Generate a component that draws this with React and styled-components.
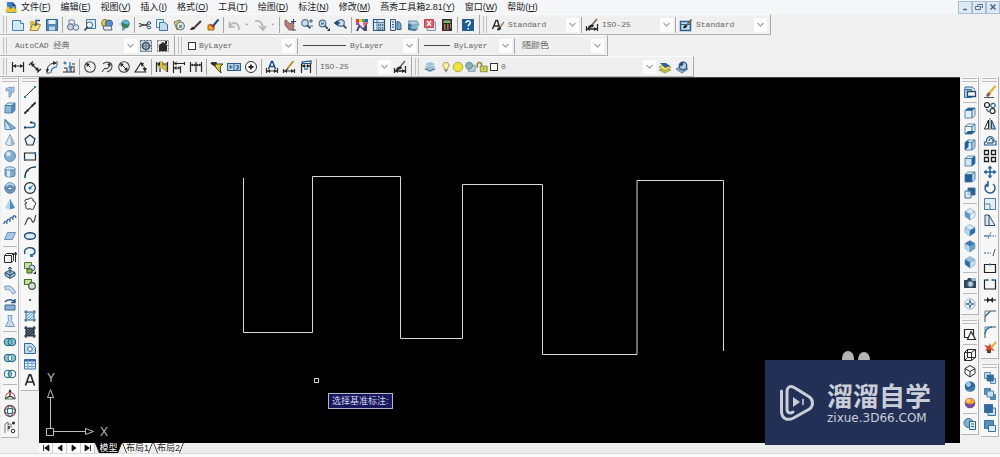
import React, { useState } from 'react';
import styled, { createGlobalStyle } from 'styled-components';

const GlobalStyle = createGlobalStyle`
  * {
    box-sizing: border-box;
  }
  body {
    margin: 0;
    background: #f0f0f0;
    font-family: 'Liberation Sans', 'Noto Sans CJK SC', sans-serif;
    font-size: 9px;
    color: #222;
  }
  button,
  select {
    font: inherit;
    color: inherit;
    border: 0;
    margin: 0;
    padding: 0;
    background: none;
  }
`;

const Page = styled.div`
  display: flex;
  flex-direction: column;
  min-height: 100vh;
`;

const MenuBar = styled.nav`
  display: flex;
  align-items: center;
  height: 14px;
  padding-left: 5px;
  background: #f4f6f8;
`;

const MenuList = styled.div`
  display: flex;
  flex: 1;
  gap: 10px;
  padding-left: 3px;
`;

const MenuItem = styled.button`
  line-height: 14px;
  white-space: nowrap;
  color: #1a1a1a;
`;

const WindowButton = styled.button`
  display: grid;
  place-items: center;
  width: 14px;
  height: 13px;
  background: #dce9f7;
  border: 1px solid #a9bdd3;
`;

const ToolbarRow = styled.div`
  display: flex;
  height: 21px;
`;

const Toolbar = styled.div`
  display: flex;
  align-items: center;
  height: 21px;
  padding-right: 3px;
  background: #f1f1f1;
  border-right: 1px solid #a8a8a8;
  border-bottom: 1px solid #b4b4b4;
  border-top: 1px solid #fafafa;
`;

const Grip = styled.span`
  width: 4px;
  height: 17px;
  margin: 0 2px 0 3px;
  border-left: 1px solid #c2c2c2;
  border-right: 1px solid #c2c2c2;
`;

const Sep = styled.span`
  width: 1px;
  height: 16px;
  margin: 0 1px 0 2px;
  background: #a6a6a6;
`;

const ToolButton = styled.button`
  display: grid;
  place-items: center;
  width: ${p => (p.$narrow ? '9px' : '17px')};
  height: 16px;
`;

const ComboBox = styled.label`
  display: grid;
  grid-template-columns: auto 1fr 13px;
  align-items: center;
  width: ${p => p.$width};
  height: 15px;
  padding-left: ${p => (p.$indent ? '6px' : '2px')};
  background: #efefef;
`;

const Lead = styled.span`
  grid-area: 1 / 1;
  display: flex;
  align-items: center;
  padding-right: 2px;
`;

const Select = styled.select`
  grid-area: 1 / 2 / 2 / 4;
  appearance: none;
  min-width: 0;
  width: 100%;
  height: 15px;
  font-family: 'Liberation Mono', 'Noto Sans CJK SC', monospace;
  font-size: ${p => (p.$cjk ? '9px' : '8px')};
  color: #666;
  outline: 0;
`;

const ComboArrow = styled.span`
  grid-area: 1 / 3;
  display: grid;
  place-items: center;
  height: 14px;
  background: #fdfdfd;
  pointer-events: none;
`;

const LineSample = styled.span`
  width: ${p => p.$width};
  height: 1px;
  margin: 0 2px;
  background: #444;
`;

const Body = styled.div`
  display: flex;
  flex: 1;
`;

const Dock = styled.div`
  display: flex;
  align-items: flex-start;
  gap: 2px;
  padding: ${p => (p.$right ? '0 1px' : '0 0 0 1px')};
`;

const DockColumn = styled.div`
  display: flex;
  flex-direction: column;
  gap: 4px;
`;

const DockPanel = styled.div`
  display: flex;
  flex-direction: column;
  align-items: center;
  width: 18px;
  padding-bottom: 2px;
  background: #f7f7f7;
  border-right: 1px solid #b4b4b4;
  border-bottom: 1px solid #b4b4b4;
`;

const DockGrip = styled.span`
  width: 15px;
  height: 4px;
  margin: 1px 0 2px;
  border-top: 1px solid #bcbcbc;
  border-bottom: 1px solid #bcbcbc;
`;

const DockSep = styled.span`
  width: 14px;
  height: 1px;
  margin: 2px 0;
  background: #b8b8b8;
`;

const Workspace = styled.main`
  display: flex;
  flex-direction: column;
  flex: 1;
  min-width: 0;
`;

const Canvas = styled.section`
  position: relative;
  flex: 1;
  min-height: 366px;
  background: #000;
  border-top: 1px solid #444;
`;

const Drawing = styled.svg`
  display: block;
  width: 100%;
  height: 365px;
`;

const DynamicPrompt = styled.div`
  position: absolute;
  left: 289px;
  top: 315px;
  padding: 0 3px;
  line-height: 14px;
  white-space: nowrap;
  color: #d4d4ec;
  background: #17175c;
  border: 1px solid #b4b4cc;
`;

const Badge = styled.aside`
  position: absolute;
  right: 15px;
  bottom: -2px;
  display: flex;
  align-items: center;
  gap: 12px;
  width: 180px;
  height: 85px;
  padding-left: 14px;
  background: #233055;
  color: #c9cdd8;
`;

const BadgeEars = styled.svg`
  position: absolute;
  left: 76px;
  top: -9px;
`;

const BadgeText = styled.div`
  display: flex;
  flex-direction: column;
  gap: 4px;
`;

const BadgeTitle = styled.div`
  font: 700 26px/26px 'Noto Sans CJK SC', sans-serif;
`;

const BadgeLink = styled.a`
  font: 12px/12px 'DejaVu Sans', sans-serif;
  color: inherit;
  text-decoration: none;
`;

const TabBar = styled.div`
  display: flex;
  height: 10px;
  background: #ececec;
`;

const TabNav = styled.button`
  display: grid;
  place-items: center;
  width: 14px;
  height: 10px;
  background: #fbfbfb;
  border-right: 1px solid #ccc;
`;

const Tab = styled.button`
  position: relative;
  width: ${p => (p.$active ? '27px' : '31px')};
  height: 10px;
  line-height: 10px;
  white-space: nowrap;
  color: ${p => (p.$active ? '#fff' : '#222')};
  background: ${p => (p.$active ? '#000' : '#f8f8f8')};
  clip-path: polygon(0 0, 100% 0, calc(100% - 4px) 100%, 4px 100%);

  &::before,
  &::after {
    content: '';
    position: absolute;
    top: 0;
    width: 1px;
    height: 10px;
    background: #222;
  }
  &::before {
    left: 2px;
    transform: skewX(22deg);
  }
  &::after {
    right: 2px;
    transform: skewX(-22deg);
  }
`;

const StatusStrip = styled.footer`
  height: 4px;
  background: #fafafa;
  border-top: 1px solid #dcdcdc;
`;

// ---- icons, all on a 14x14 grid ----

const K = '#2a2a2a';
const B = '#3a729e';
const N = { fill: 'none' };

const cube = (top, left, right) => (
  <>
    <path d="M2 4.500 5 2h7L9 4.500z" fill={top} stroke={B} strokeWidth=".8" />
    <path d="M2 4.500h7V12H2z" fill={left} stroke={B} strokeWidth=".8" />
    <path d="M9 4.500 12 2v7.500L9 12z" fill={right} stroke={B} strokeWidth=".8" />
  </>
);

const iso = (top, left, right) => (
  <>
    <path d="M2 4.500 7 1.500l5 3-5 3z" fill={top} stroke="#5a8db5" strokeWidth=".5" />
    <path d="M2 4.500v5L7 13V7.500z" fill={left} stroke="#5a8db5" strokeWidth=".5" />
    <path d="M12 4.500v5L7 13V7.500z" fill={right} stroke="#5a8db5" strokeWidth=".5" />
  </>
);

const venn = (a, mid) => (
  <>
    <circle cx="5" cy="7" r="3.800" fill={a} stroke="#1d6478" />
    <circle cx="9" cy="7" r="3.800" fill={a} stroke="#1d6478" />
    <path d="M7 3.800a3.800 3.800 0 0 1 0 6.400 3.800 3.800 0 0 1 0-6.400z" fill={mid} stroke="#1d6478" strokeWidth=".7" />
  </>
);

const squares = (front, back) => (
  <>
    <path d="M1.500 1.500h6v6h-6zM7.500 7.500h5v5h-5z" fill={back} stroke={B} strokeWidth=".8" />
    <path d="M4 4h6.500v6H4z" fill={front} stroke={B} strokeWidth=".8" />
  </>
);

const lens = (x, y) => (
  <>
    <circle cx={x} cy={y} r="3.300" fill="#c6dff0" stroke="#54738c" strokeWidth="1.200" />
    <path d={`M${x + 2.4} ${y + 2.4}l3 3`} stroke="#3a4c5c" strokeWidth="1.800" />
  </>
);

const icons = {
  app: (
    <>
      <path d="M2 1h6l4 4v8H2z" fill="#3d7fc1" />
      <path d="M0 12 3 5l3 4 3-3 5 6z" fill="#f0c22e" />
      <path d="M8 1v4h4z" fill="#234b85" />
    </>
  ),
  New: (
    <>
      <path d="M1.500 2.500h8l3 3v7h-11z" fill="#d3e9f5" stroke="#4681a5" />
      <path d="M9.500 2.500v3h3" fill="#fff" stroke="#4681a5" />
    </>
  ),
  Open: (
    <>
      <path d="M2 3h4l1 2h4v7H2z" fill="#d8b64c" />
      <path d="M4.500 6.500h8l-2.500 6H2z" fill="#f4dd85" stroke="#8d7329" strokeWidth=".8" />
      <path d="M8 6V2.500h4M7 8l2-3" stroke="#395774" strokeWidth="1.500" {...N} />
    </>
  ),
  Save: (
    <>
      <path d="M1.500 1.500h11v11h-11z" fill="#4d8ab9" stroke="#2f6391" />
      <path d="M3.500 2h7v4h-7z" fill="#e7f1f8" />
      <path d="M4 8.500h6v4H4z" fill="#bdd5e6" />
    </>
  ),
  Plot: (
    <>
      <path d="M3 2h5l1 4H3z" fill="#e7edf5" stroke="#7a8799" />
      <circle cx="4.500" cy="9" r="3" fill="#c9d1df" stroke="#5f6f8c" />
      <circle cx="10" cy="9.500" r="2.800" fill="#dde3ec" stroke="#5f6f8c" />
    </>
  ),
  'Plot Preview': (
    <>
      <path d="M3.500 1.500h9v9h-9z" fill="#dbe9f4" stroke="#48779c" />
      <circle cx="6.500" cy="7" r="3" fill="#eef7fc" stroke="#3e617e" />
      <path d="m4.500 9-3 3.500" stroke="#2b4256" strokeWidth="1.600" />
    </>
  ),
  Publish: (
    <>
      <circle cx="5" cy="5" r="3.500" fill="#ecc84c" stroke="#917526" />
      <circle cx="9" cy="5.500" r="3.500" fill="#5b91c4" stroke="#2e5b88" />
      <path d="M3 8h8l1 4H4z" fill="#e6edf4" stroke="#50647b" />
    </>
  ),
  '3DDWF': (
    <>
      <path d="M1 6 7 2l6 3-5 5z" fill="#cfd8df" />
      <circle cx="8.500" cy="6" r="4.200" fill="#39805a" />
      <path d="M5 4c2-3 6-2 7 1-1 3-4 1-7-1z" fill="#5fb4e0" />
      <path d="M5 9v4l4-2z" fill="#7197b3" />
    </>
  ),
  Cut: (
    <>
      <path d="M1 5.500 10 8M1 8.500 10 6" stroke="#333" strokeWidth="1.200" />
      <ellipse cx="11" cy="5" rx="1.800" ry="1.300" stroke="#2b4d72" {...N} />
      <ellipse cx="11" cy="9.500" rx="1.800" ry="1.300" stroke="#2b4d72" {...N} />
    </>
  ),
  Copy: (
    <>
      <path d="M1.500 1.500h7v8h-7z" fill="#e4f1f9" stroke="#4b86ab" />
      <path d="M4.500 4.500h5l3 2v6h-8z" fill="#bfdcec" stroke="#3d7699" />
    </>
  ),
  Paste: (
    <>
      <path d="m2 4 6-2 3 6-6 4z" fill="#d8cf8f" stroke="#77784a" />
      <circle cx="8.500" cy="8" r="4" fill="#d9e7da" stroke="#55756c" />
      <path d="M7 7h3v3H7z" fill="#7396a3" />
    </>
  ),
  'Match Properties': (
    <>
      <path d="m12 3-6 6" stroke="#50382c" strokeWidth="2.200" />
      <path d="M1 12c1-3 3-4 5-3 1 2-1 3-5 3z" fill={K} />
    </>
  ),
  'Block Editor': (
    <>
      <path d="M2 7h6v5H2z" fill="#f1ab30" stroke="#9b6515" />
      <path d="m12.500 1.500-6 7" stroke="#2b4a7b" strokeWidth="2" />
      <path d="m4 6 4 4" stroke="#c5371e" strokeWidth="1.500" />
    </>
  ),
  Undo: <path d="M12 12c0-8-6-9-9-4M2.500 3.500V9h5.500" stroke="#b5b5b5" strokeWidth="1.700" {...N} />,
  Redo: <path d="M2 3c5-1 8 2 8 8M6 8l4 4 3-4" stroke="#b5b5b5" strokeWidth="1.700" {...N} />,
  more: <path d="M5 6h5L7.500 8.500z" fill="#a4a4a4" />,
  Pan: (
    <>
      <path d="M2 2c2 0 3 2 5 4l2-2 2 4-1 4H6L2 7z" fill="#b27f79" stroke="#7d4f4c" strokeWidth=".8" />
      <path d="M10.500 1v5M8 3.500h5M9 12h4" stroke="#2c4e71" strokeWidth="1.200" />
    </>
  ),
  'Zoom Realtime': (
    <>
      {lens(5, 5)}
      <path d="M9 3h4M11 1v4M10 8h3" stroke="#35567c" />
    </>
  ),
  'Zoom Window': (
    <>
      {lens(5.5, 5.5)}
      <path d="M4 4.500h3v2H4z" fill="#56799a" />
      <path d="M13 10v3h-3z" fill={K} />
    </>
  ),
  'Zoom Previous': (
    <>
      {lens(7, 5)}
      <path d="M1 5h5M4 2.500 1 5l3 2.500" stroke="#24466b" strokeWidth="1.500" {...N} />
    </>
  ),
  Properties: (
    <>
      <path d="M1 1h3v3H1z" fill="#e33d33" />
      <path d="M4 1h3v3H4z" fill="#eec82f" />
      <path d="M7 1h3v3H7z" fill="#3cae54" />
      <path d="M10 1h3v3h-3z" fill="#2d64c8" />
      <path d="M1 4h3v3H1z" fill="#b43cba" />
      <path d="m4 6 4 4 4-5v8H9L5 9l-2 4H1z" fill="#4c4a70" />
      <path d="M8 4h5v2L8 8z" fill="#d56a86" />
    </>
  ),
  DesignCenter: (
    <>
      <path d="M1.500 1.500h11v11h-11z" fill="#e2eef7" stroke="#2d5578" strokeWidth="1.200" />
      <path d="M5 2v10M2 4.500h10M6.500 6h2v2h-2zM10 6h1v2h-1zM6.500 9.500h2v2h-2zM10 9.500h1v2h-1z" stroke="#3d6c93" strokeWidth=".9" {...N} />
    </>
  ),
  'Tool Palettes': (
    <>
      <path d="M1.500 1.500h5v11h-5z" fill="#dbe8f3" stroke="#33597d" />
      <path d="M3 4h2M3 6.500h2M3 9h2" stroke="#33597d" />
      <path d="M8 3.500c3 0 4 2 4 5v3H8z" fill="#7fa9cb" stroke="#33597d" />
    </>
  ),
  'Sheet Set Manager': (
    <>
      <path d="M2 3h9l2 4H5z" fill="#b5cfe0" stroke="#577c95" strokeWidth=".8" />
      <path d="m2 5 10 6-3 2-7-1z" fill="#3a7091" />
      <path d="m4 9 8-4v6H6z" fill="#86b3cd" />
    </>
  ),
  'Markup Set Manager': (
    <>
      <path d="M4 4h8.500v8.500H4z" fill="#dfe6ee" stroke="#8194aa" />
      <path d="M1.500 1.500h9v8h-9z" fill="#e1606a" stroke="#c04555" />
      <path d="m4 3 4 5M8 3 4 8" stroke="#fff" strokeWidth="1.300" />
    </>
  ),
  QuickCalc: (
    <>
      <path d="M2 1h10v12H2z" fill="#3b2b22" />
      <path d="M3.500 2.500h7v2.500h-7z" fill="#78bb82" />
      <path d="M4 7h1.500M7 7h1.500M10 7h1M4 9h1.500M7 9h1.500M10 9h1M4 11h1.500M7 11h1.500" stroke="#efc5a8" strokeWidth="1.200" />
    </>
  ),
  Help: (
    <>
      <path d="M1 1h12v12H1z" fill="#215d92" />
      <path d="M5 5c0-3 4.500-2.500 4.200 0C9 6.500 7.200 6.500 7.200 8.500M7.200 10v1.500" stroke="#fff" strokeWidth="1.500" {...N} />
    </>
  ),
  'Text Style': (
    <>
      <path d="M1.500 11 5 2.500h1.500L9 11M3 8h5" stroke={K} strokeWidth="1.400" {...N} />
      <path d="m13 4-4.500 6" stroke="#a08a70" strokeWidth="1.600" />
      <path d="M6 12.500c0-3 2-4 4-3 .5 2-1 3-4 3z" fill={K} />
    </>
  ),
  'Dimension Style': (
    <>
      <path d="m12 1-5 6" stroke="#7e6a56" strokeWidth="1.800" />
      <path d="M3 9c2-3 4-3 6-2 0 2-2 3-6 3z" fill={K} />
      <path d="M1.500 8v5M12.500 6v7M2 11h10" stroke={K} strokeWidth="1.300" />
      <path d="m2 11 3-2v4zM12 11 9 9v4z" fill={K} />
    </>
  ),
  'Table Style': (
    <>
      <path d="M1.500 3.500h10v9h-10z" fill="#c3dcef" stroke="#295f91" strokeWidth="1.500" />
      <path d="M2 6.500h9" stroke="#295f91" />
      <path d="m12.500 1.500-5 6" stroke="#6d664a" strokeWidth="1.800" />
      <path d="M4 10c1-4 4-3 4-2s-1 3-4 2z" fill={K} />
    </>
  ),
  'Workspace Settings': (
    <>
      <path d="M1.500 1.500h11v11h-11z" fill="#c9d7e0" stroke="#4d6370" strokeDasharray="2 1" />
      <circle cx="7" cy="7" r="3.300" fill="#bdd0dc" stroke="#3a5568" strokeWidth="1.500" />
      <path d="M7 2v10M2 7h10" stroke="#3a5568" strokeDasharray="1.500 7" />
      <circle cx="7" cy="7" r="1.200" fill="#fff" stroke="#3a5568" />
    </>
  ),
  'My Workspace': (
    <>
      <path d="M1.500 1.500h11v11h-11z" fill="#e4e4e4" stroke="#777" strokeDasharray="2 1" />
      <path d="M2 7 7 3l5 4h-1v5H3V7z" fill={K} />
      <path d="M9 2h2v3H9z" fill={K} />
    </>
  ),
  Linear: (
    <>
      <path d="M1.500 2v10M12.500 2v10M2 6h10" stroke={K} strokeWidth="1.200" />
      <path d="m2 6 3-2v4zM12 6 9 4v4z" fill={K} />
    </>
  ),
  Aligned: (
    <>
      <path d="M1 5 5 1.500M9 12.500 13 9M3.500 4l7 6.500" stroke={K} strokeWidth="1.200" />
      <path d="m3 3 4 1-3 3zM11 11l-4-1 3-3z" fill={K} />
    </>
  ),
  'Arc Length': (
    <>
      <path d="M2 12C2 6 5 3 11 3" stroke={K} {...N} />
      <path d="M6 13c0-4 2-6 6-6" stroke="#3d83b7" strokeWidth="1.400" {...N} />
      <path d="m8 1 4 2-4 2zM1 9l3 0-2 4z" fill={K} />
      <path d="M12 1v5M1 13h4" stroke={K} strokeWidth=".8" />
    </>
  ),
  Ordinate: (
    <>
      <path d="M1 12h12M5 8v4M5 8H2M9 12V7h4M12 8v4" stroke={K} {...N} />
      <path d="M3 1.500v3M1.500 3h3M8 2v9M6.500 7h3" stroke="#3777a6" strokeWidth="1.300" />
      <path d="M10 4h3" stroke={K} />
    </>
  ),
  Radius: (
    <>
      <circle cx="7" cy="7" r="5.300" stroke="#444" strokeWidth="1.100" {...N} />
      <path d="m7.500 7.500-4-4" stroke={K} />
      <path d="m3 3 4 1-3 3z" fill={K} />
    </>
  ),
  Jogged: (
    <>
      <path d="M3 4c2-3 9-2 9 2 0 3-2 5-5 6" stroke="#444" strokeWidth="1.100" {...N} />
      <path d="M2 12 5 8l2 1 3-4" stroke={K} {...N} />
      <path d="m11 3-4 1 3 3z" fill={K} />
    </>
  ),
  Diameter: (
    <>
      <circle cx="7" cy="7" r="5.300" stroke="#444" strokeWidth="1.100" {...N} />
      <path d="m3.500 3.500 7 7" stroke={K} />
      <path d="m3 3 4 1-3 3zM11 11l-4-1 3-3z" fill={K} />
    </>
  ),
  Angular: (
    <>
      <path d="M12.500 12H1L7.500 2" stroke={K} strokeWidth="1.200" {...N} />
      <path d="M7 4c3 1 4 4 4 7" stroke={K} {...N} />
      <path d="M6 3l4 0-2 4zM8.500 8 13 8l-2 4z" fill={K} />
    </>
  ),
  'Quick Dimension': (
    <>
      <path d="M1.500 2v10M12.500 2v10M2 4h10M5 8v4" stroke={K} strokeWidth="1.200" />
      <path d="M4 2h4L7 5h4l1 7-6-5H3z" fill="#e6c63b" stroke="#766317" strokeWidth=".6" />
      <path d="m2 4 3-2v4z" fill={K} />
    </>
  ),
  Baseline: (
    <>
      <path d="M1.500 1v12M2 3.500h11M2 8h6M12.500 2v3M8.500 6v7" stroke={K} strokeWidth="1.200" />
      <path d="m2 3.500 2.500-2v4zM2 8l2.500-2v4zM8 8 6 6.500v3z" fill={K} />
    </>
  ),
  Continue: (
    <>
      <path d="M1.500 2v10M7 2v10M12.500 2v10M2 5h10" stroke={K} strokeWidth="1.200" />
      <path d="m2 5 2-1.500v3zM12 5l-2-1.500v3zM7 5 5 3.500v3zM7 5l2-1.500v3z" fill={K} />
    </>
  ),
  'Dimension Space': (
    <>
      <path d="M1 3h6M1 3l6 4" stroke={K} strokeWidth="1.600" />
      <path d="M5 4h8l-3 3 1 6-4-4-2-3z" fill="#dfd13f" stroke="#3c4319" />
      <path d="m1 3 5-1-1 4z" fill={K} />
    </>
  ),
  Tolerance: (
    <>
      <path d="M.500 3.500h13v7H.500z" fill="#b9d5ea" stroke="#28608c" strokeWidth="1.200" />
      <path d="M7 3.500v7M2 7h3.500M3.700 5v4M9 5.500h2V9H9M11 5.500V9" stroke="#28608c" {...N} />
    </>
  ),
  'Center Mark': (
    <>
      <circle cx="7" cy="7" r="5.500" fill="#fbfbfb" stroke="#333" />
      <path d="M7 4.500v5M4.500 7h5" stroke={K} strokeWidth="1.800" />
    </>
  ),
  'Dimension Edit': (
    <>
      <path d="M3.500 9 6.500 1.500h1L10.500 9M4.500 6.500h5" stroke="#204e87" strokeWidth="1.500" {...N} />
      <path d="M1.500 8v5M12.500 8v5M2 11h10" stroke={K} strokeWidth="1.200" />
      <path d="m2 11 3-2v4zM12 11 9 9v4z" fill={K} />
    </>
  ),
  'Dimension Text Edit': (
    <>
      <path d="M1.500 9v4M12.500 9v4M2 11h10" stroke={K} strokeWidth="1.200" />
      <path d="m2 11 3-2v4zM12 11 9 9v4z" fill={K} />
      <path d="m11.500 1-6 7.500" stroke="#bd9329" strokeWidth="2" />
      <path d="M4 10.500 5 8l1.500 1z" fill={K} />
    </>
  ),
  'Dimension Update': (
    <>
      <path d="M3 5V2l9-1v3M3 3.500h9" stroke="#1e4e7e" strokeWidth="1.200" {...N} />
      <path d="M2.500 4v9M11.500 4v9M2 6h10" stroke={K} strokeWidth="1.200" />
      <path d="m3 6 3-2v4zM11 6 8 4v4z" fill={K} />
      <path d="M5 8h4v2H5z" fill="#5f9ac4" />
    </>
  ),
  Layers: (
    <>
      <path d="m1 9 6-2.500L13 9l-6 3z" fill="#6488a4" />
      <path d="m1 6.500 6-2.500 6 2.500-6 3z" fill="#8cadc6" stroke="#fff" strokeWidth=".5" />
      <path d="M1 4 7 1.500 13 4 7 7z" fill="#a4c0d5" stroke="#fff" strokeWidth=".5" />
    </>
  ),
  bulb: (
    <>
      <path d="M7 1.500a3.500 3.500 0 0 1 2 6.300V10H5V7.800A3.500 3.500 0 0 1 7 1.500z" fill="#fbf2a0" stroke="#9a8d4e" />
      <path d="M5.500 11h3M6 12.500h2" stroke="#666" />
    </>
  ),
  sun: <circle cx="7" cy="7" r="5.500" fill="#f0e436" stroke="#a49b36" />,
  freeze: (
    <>
      <path d="M5 5h8v7H5z" fill="#c6d6dd" stroke="#6e8b9b" />
      <circle cx="6" cy="5.500" r="4" fill="#8cb4ad" stroke="#5b8192" />
    </>
  ),
  lock: (
    <>
      <path d="M1.500 8V4c0-3 5-3 5 0v4" stroke="#88893a" strokeWidth="1.800" {...N} />
      <path d="M5 6h8v6.500H5z" fill="#d3d956" stroke="#7e7e2f" />
      <path d="M9 8v2" stroke="#555" />
    </>
  ),
  'Layer Previous': (
    <>
      <path d="m1 10 6-3 6 3-6 3z" fill="#c5c845" stroke="#777a33" strokeWidth=".6" />
      <path d="m1 7 6-3 6 3-6 4z" fill="#efe168" stroke="#7b772e" strokeWidth=".6" />
      <path d="M2 3h6l4 3-5 2z" fill="#34618d" />
    </>
  ),
  'Layer States': (
    <>
      <path d="m1 9 6-3 6 3-6 4z" fill="#8cb2cd" stroke="#43708f" strokeWidth=".8" />
      <circle cx="8" cy="6" r="3.800" fill="#a9c8dd" stroke="#2b567e" strokeWidth="1.300" />
      <path d="M8 1.500 4 5l4 2" fill="#20456b" />
      <path d="M8 7V5" stroke="#fff" />
    </>
  ),
  // left dock, modeling
  Polysolid: <path d="M3 3.500 8 2v9l-2 1.500V5L3 6zM8 3l3-1v5L8 8.500" fill="#b3cdea" stroke="#6c91bc" strokeWidth=".8" />,
  Box: cube('#dcebf7', '#8fb8d8', '#5b8fb9'),
  Wedge: (
    <>
      <path d="M2 2.500 12.500 11l-4 1.500L2 10z" fill="#8bb3d1" stroke={B} strokeWidth=".8" />
      <path d="M2 2.500 8.500 12.500H2z" fill="#cfe2f0" stroke={B} strokeWidth=".8" />
    </>
  ),
  Cone: (
    <>
      <path d="M7 1.500 2.500 11c2 2 7 2 9 0z" fill="#dfe9f1" stroke="#6c8499" strokeWidth=".8" />
      <path d="m7.500 2.500 3.500 8.500-3 1z" fill="#99b2c6" />
    </>
  ),
  Sphere: (
    <>
      <circle cx="7" cy="7" r="5.500" fill="#85afd0" stroke="#527fa5" strokeWidth=".8" />
      <circle cx="5.500" cy="5" r="2.300" fill="#d8e9f5" />
    </>
  ),
  Cylinder: (
    <>
      <path d="M2 3.500v7c1 2 9 2 10 0v-7z" fill="#80abcd" stroke="#4b779c" strokeWidth=".8" />
      <path d="M4 5h3v6.800l-3-.5z" fill="#dcebf6" />
      <ellipse cx="7" cy="3.500" rx="5" ry="1.700" fill="#d1e3f0" stroke="#4b779c" strokeWidth=".8" />
    </>
  ),
  Torus: (
    <>
      <circle cx="7" cy="7" r="5.300" fill="#7099bd" stroke="#436b90" strokeWidth=".8" />
      <path d="M3 5c2-3 6-3 8 0" stroke="#c9deee" strokeWidth="1.300" {...N} />
      <ellipse cx="7" cy="7.500" rx="2.300" ry="1.600" fill="#e9f2f8" stroke="#38608a" />
    </>
  ),
  Pyramid: (
    <>
      <path d="M7 1.500 2 11l5 1.500z" fill="#b6d4e8" />
      <path d="M7 1.500 12 11l-5 1.500z" fill="#4f8dbd" />
    </>
  ),
  Helix: <path d="M1 11c0-4 3-3 3 0M4 9c0-4 3-3 3 0M7 7c0-4 3-3 3 0M10 5c0-3 2.500-3 3 0" stroke="#3f6da5" strokeWidth="1.400" {...N} />,
  'Planar Surface': <path d="m4.500 3.500 8 0-3 7h-8z" fill="#a9c6e4" stroke="#6a8fb9" />,
  Extrude: (
    <>
      <path d="M1.500 5.500h7v7h-7zM1.500 5.500l2-2h7l-2 2M10.500 3.500v7l-2 2" stroke={K} {...N} />
      <path d="M12.500 12V3M11 5l1.500-3L14 5" stroke={K} {...N} />
    </>
  ),
  Presspull: (
    <>
      <path d="M2 6.500 7 4l5 2.500v3L7 12.500 2 9.500z" fill="#9abad5" stroke="#335a80" />
      <path d="M7 1v6M5 3l2-2 2 2M2 6.500l5 2.500 5-2.500M7 9v3" stroke="#26415d" {...N} />
    </>
  ),
  Sweep: (
    <path d="M1.500 4.500c5-2 9 1 11 6l-3 1.500C8 8 5 7 2.500 8z" fill="#c5d9ec" stroke="#7898bb" />
  ),
  Revolve: (
    <>
      <path d="M2 7h10v5H2z" fill="#8ab1d4" stroke="#37669a" />
      <path d="M2 4c2-3 8-3 10 0M12 1v3.500H8" stroke="#26558d" strokeWidth="1.400" {...N} />
    </>
  ),
  Loft: <path d="M5 1.500h4l-.5 5 3 6h-9l3-6z" fill="#c7d9ee" stroke="#7d9cc3" />,
  Union: venn('#7fbdd0', '#7fbdd0'),
  Subtract: venn('#8cc3d6', '#fff'),
  Intersect: venn('#f4f9fb', '#77b6cd'),
  '3D Move': (
    <>
      <path d="M7 8V2M7 8 2 11M7 8l5 3" stroke={K} strokeWidth="1.200" />
      <path d="M7 1 5.500 4h3z" fill={K} />
      <path d="m2 11 1.500-5L7 4l4 2 1.500 5" stroke="#be4848" {...N} />
      <path d="M2 11h10" stroke="#3c855a" />
    </>
  ),
  '3D Rotate': (
    <>
      <circle cx="7" cy="7" r="5.500" stroke="#943c40" strokeWidth="1.300" {...N} />
      <ellipse cx="7" cy="7" rx="2.500" ry="5.500" stroke="#315f87" {...N} />
      <ellipse cx="7" cy="7" rx="5.500" ry="2.500" stroke="#2b6b5a" {...N} />
    </>
  ),
  '3D Align': (
    <>
      <path d="M2 13V4l3-2v9M5 4h3v4" stroke="#777" {...N} />
      <circle cx="10.500" cy="3" r="1.500" fill={K} />
      <circle cx="10" cy="11" r="1.800" stroke={K} {...N} />
      <path d="M6 6v3" stroke={K} strokeWidth="1.500" />
    </>
  ),
  // left dock, draw
  Line: (
    <>
      <path d="m2 12 10-10" stroke="#333" />
      <path d="M1 11h2v2H1zM11 1h2v2h-2z" fill="#2d77ad" />
    </>
  ),
  'Construction Line': (
    <>
      <path d="m1.500 12.500 11-11" stroke="#222" strokeWidth="1.200" />
      <path d="M3.500 8.500h2v2h-2zM8.500 3.500h2v2h-2z" fill="#222" />
      <path d="m13 1-3 1 2 2zM1 13l3-1-2-2z" fill="#222" />
    </>
  ),
  Polyline: (
    <>
      <path d="M2 10.500h7c4 0 4-5 0-5" stroke="#2d6695" strokeWidth="1.400" {...N} />
      <path d="M1 9.500h2v2H1zM7 4.500h2v2H7z" fill="#173c61" />
    </>
  ),
  Polygon: <path d="M7 2 12 6l-2 6H4L2 6z" fill="#eaf3f8" stroke="#223b50" strokeWidth="1.200" />,
  Rectangle: (
    <>
      <path d="M1.500 4h11v7h-11z" fill="#e9f3fa" stroke="#222" strokeWidth="1.200" />
      <path d="M1 10h2v2H1zM11 3h2v2h-2z" fill="#2d77ad" />
    </>
  ),
  Arc: (
    <>
      <path d="M2 12C2 6 6 2 12 2" stroke="#222" strokeWidth="1.200" {...N} />
      <path d="M1 11h2v2H1zM11 1h2v2h-2zM4 4.500h2v2H4z" fill="#2d77ad" />
    </>
  ),
  Circle: (
    <>
      <circle cx="7" cy="7" r="5.400" fill="#edf6fb" stroke="#222" strokeWidth="1.200" />
      <path d="m7 7 3.500-3.500" stroke="#2d77ad" />
      <circle cx="7" cy="7" r="1.600" fill="#2d77ad" />
    </>
  ),
  'Revision Cloud': (
    <path d="M4 6C.5 5 2 1 5 2.500 7 0 11 1 10 4c3 0 3.500 4 1 5 1 3-2 4.500-4 2.500-3 2-5-1-4-3C1 7.500 2 6 4 6z" fill="#f6fafc" stroke="#222" />
  ),
  Spline: <path d="M1.500 12c2-1 2-8 5-7s2 5 4 4 1-5 2.500-7" stroke="#444" strokeWidth="1.200" {...N} />,
  Ellipse: <ellipse cx="7" cy="7" rx="5.500" ry="3.300" fill="#d9ebf6" stroke="#1f486c" strokeWidth="1.400" />,
  'Ellipse Arc': (
    <>
      <path d="M2 9C0 4 5 2 9 3c4 1 4 6 0 7" stroke="#244e73" strokeWidth="1.300" fill="#e6f1f8" />
      <path d="M7 9h3v3H7z" fill="#2d77ad" />
    </>
  ),
  'Insert Block': (
    <>
      <path d="M1.500 1.500h7v6h-7z" fill="#cde0a1" stroke="#50762e" />
      <circle cx="9" cy="7" r="3" fill="#c7dde9" stroke="#335f83" />
      <path d="M4 8h5v4H4z" fill="#9cc060" stroke="#37561e" />
      <path d="M13 10v3h-3z" fill={K} />
    </>
  ),
  'Make Block': (
    <>
      <path d="M1.500 2.500h7v5h-7z" fill="#cde0a1" stroke="#48702c" strokeWidth="1.200" />
      <circle cx="9" cy="9" r="3.300" fill="#d5e4ce" stroke="#3a5d3a" strokeWidth="1.200" />
    </>
  ),
  Point: <path d="M6 6h2v2H6z" fill="#2c6796" />,
  Hatch: (
    <>
      <path d="M3 3h8v8H3z" fill="#cfe3f1" />
      <path d="M3 1v12M11 1v12M1 3h12M1 11h12" stroke="#2a5f8c" />
      <path d="m3 8 5-5M3 11l8-8M6 11l5-5" stroke="#5b91b9" strokeWidth=".8" />
    </>
  ),
  Gradient: (
    <>
      <path d="M3 3h8v8H3z" fill="#50636f" />
      <path d="M3 1v12M11 1v12M1 3h12M1 11h12" stroke="#1d2b36" strokeWidth="1.200" />
      <path d="m3 8 5-5M3 11l8-8M6 11l5-5" stroke="#1d2b36" />
    </>
  ),
  Region: (
    <>
      <path d="M1.500 2.500h7l4 4v6h-11z" fill="#c4dcec" stroke="#356b95" />
      <circle cx="7" cy="8" r="2.300" fill="#fff" stroke="#356b95" />
    </>
  ),
  Table: (
    <>
      <path d="M1.500 2.500h11v9.500h-11z" fill="#e8f2fb" stroke="#3e76b1" />
      <path d="M1.500 3.500h11" stroke="#2c60a5" strokeWidth="2" />
      <path d="M2 6.500h10M2 9.500h10M5 3v9M9 3v9" stroke="#6f9fd1" />
    </>
  ),
  'Multiline Text': <path d="M2.500 12.500 6.300 1.800h1.400l3.800 10.700M4 9h6" stroke={K} strokeWidth="1.700" {...N} />,
  // right dock, view
  'Named Views': (
    <>
      <path d="M2 4.500V2h7l3 2.500" fill="#cfe1ef" stroke={B} />
      <path d="M1.500 4.500h7v8h-7z" fill="#b1cee2" stroke={B} />
      <path d="M4.500 6.500h8v5h-8z" fill="#f7fafc" stroke="#1e4d75" strokeWidth="1.300" />
    </>
  ),
  Top: cube('#245f93', '#e6f0f8', '#d0e3f0'),
  Bottom: (
    <>
      {cube('#f3f8fb', '#f3f8fb', '#d7e7f2')}
      <path d="m2 12 3-3h7l-3 3z" fill="#245f93" />
    </>
  ),
  Left: (
    <>
      {cube('#e6f0f8', '#d6e6f2', '#b4d0e4')}
      <path d="m2 12V4.500L5.500 2v7z" fill="#245f93" />
    </>
  ),
  Right: cube('#e6f0f8', '#d6e6f2', '#245f93'),
  Front: cube('#e6f0f8', '#245f93', '#c4daea'),
  Back: (
    <>
      <path d="M5 2h7v7H5z" fill="#245f93" stroke={B} />
      <path d="M2 5h6v7H2z" fill="#d7e7f2" fillOpacity=".8" stroke={B} />
    </>
  ),
  'SW Isometric': iso('#d9e9f5', '#5e9aca', '#e8f1f8'),
  'SE Isometric': iso('#d9e9f5', '#bcd8ec', '#2e6ba3'),
  'NE Isometric': iso('#3d78ac', '#bcd8ec', '#6fa3cc'),
  'NW Isometric': iso('#9cc3df', '#2e6ba3', '#c9dfee'),
  Camera: (
    <>
      <path d="M1 4h3l1-2h3l1 2h4v8H1z" fill="#33495e" />
      <path d="M9 2h4v3H9z" fill="#9db9cd" />
      <circle cx="7.500" cy="8" r="2.700" fill="#b5cfe0" stroke="#6f92ac" />
    </>
  ),
  'View Center': (
    <>
      <circle cx="7" cy="7" r="5.200" fill="#eef4f8" stroke="#9fb5c5" />
      <path d="M7 3v8M3 7h8" stroke="#5e8db0" strokeWidth="2" />
      <circle cx="7" cy="7" r="1.500" fill="#fff" stroke="#3d6d92" />
    </>
  ),
  '2D Wireframe': (
    <>
      <path d="M1.500 2.500h9v8h-9z" fill="#fff" stroke={K} strokeWidth="1.200" />
      <path d="M8 4.500 12.500 12.500h-8z" fill="#fff" stroke={K} strokeWidth="1.200" />
    </>
  ),
  '3D Wireframe': <path d="M1.500 4.500h7v8h-7zM4.500 1.500h8v8h-8zM1.500 4.500l3-3M8.500 4.500l4-3M8.500 12.500l4-3M1.500 12.500l3-3" stroke={K} {...N} />,
  '3D Hidden': <path d="M2 4.500 7 1.500l5 3v5l-5 3.500-5-3.500zM2 4.500l5 3 5-3M7 7.500V13" fill="#fdfdfd" stroke={K} />,
  Realistic: (
    <>
      <circle cx="7" cy="6.500" r="5.300" fill="#2d6b9e" />
      <circle cx="5.500" cy="4.500" r="2.400" fill="#a5cde8" />
      <path d="M3 10c3 1 6 0 8-3" stroke="#69a4cb" {...N} />
    </>
  ),
  Conceptual: (
    <>
      <circle cx="7" cy="7" r="5.300" fill="#764a9c" />
      <path d="M2 6c1-5 9-5 10 0-3 3-7 3-10 0z" fill="#f2a433" />
      <circle cx="5.500" cy="4.500" r="1.500" fill="#fbe390" />
    </>
  ),
  'Visual Styles': (
    <>
      <circle cx="5.500" cy="6" r="4.500" fill="#82b0d0" stroke="#3f729a" />
      <path d="M6.500 4.500h6v8h-6z" fill="#dfecf5" stroke="#2d628f" />
      <path d="M8 7h3M8 9.500h3" stroke="#2d628f" />
    </>
  ),
  // right dock, modify
  Erase: (
    <>
      <path d="m12.500 1-6 7" stroke="#dfb440" strokeWidth="2.500" />
      <path d="m3 11 2-4 3 2-3 3z" fill="#8a5d49" />
      <path d="M1 12.500h10" stroke="#555" />
    </>
  ),
  'Copy Object': (
    <>
      <circle cx="4" cy="4" r="2.500" stroke="#222" strokeWidth="1.200" {...N} />
      <circle cx="10" cy="4.500" r="2.200" stroke="#2d6695" strokeWidth="1.200" {...N} />
      <circle cx="9.500" cy="10" r="2.500" stroke="#222" strokeWidth="1.200" {...N} />
      <path d="m3 8 3 3" stroke="#2d6695" strokeWidth="1.200" />
    </>
  ),
  Mirror: (
    <>
      <path d="M5.500 3v9h-4z" fill="#fff" stroke="#222" />
      <path d="M8.500 3v9h4z" fill="#9bc1db" stroke="#224a6b" />
      <path d="M7 1v12" stroke="#444" strokeWidth=".8" />
    </>
  ),
  Offset: (
    <>
      <path d="M1.500 12v-3h2C2 3 11 1 11 8h2v4z" fill="#dbe9f3" stroke="#2c6796" strokeWidth="1.200" />
      <path d="M4 10h6c1-5-4-6-4-2" stroke="#1d3850" {...N} />
    </>
  ),
  Array: <path d="M1.500 1.500h4v4h-4zM8.500 1.500h4v4h-4zM1.500 8.500h4v4h-4zM8.500 8.500h4v4h-4z" fill="#fff" stroke="#222" strokeWidth="1.300" />,
  Move: (
    <>
      <path d="M7 2v10M2 7h10" stroke="#255f92" strokeWidth="1.500" />
      <path d="m7 .5 2.500 3h-5zM7 13.500l2.500-3h-5zM.500 7l3-2.500v5zM13.500 7l-3-2.500v5z" fill="#255f92" />
    </>
  ),
  Rotate: <path d="M5 2.500a5 5 0 1 0 5 .5M5 0v5H1.500" stroke="#2b5f8d" strokeWidth="1.500" {...N} />,
  Scale: <path d="M1.500 1.500h11v11h-11zM1.500 7h5.500v5.500H1.500z" fill="#e3eff7" stroke="#537c9c" />,
  Stretch: <path d="M2 2h4v10.500H2zM6 2l6 10.500H6" fill="#dce8f0" stroke="#344f65" />,
  Trim: (
    <>
      <path d="M1 7h5" stroke="#2c6796" strokeWidth="1.200" />
      <path d="M7 7h6" stroke="#2c6796" strokeDasharray="1.500 1" />
      <path d="m5 10 3-7" stroke="#6c8ba2" />
    </>
  ),
  Extend: (
    <>
      <path d="M1 8h7" stroke="#2c6796" strokeDasharray="2 1" strokeWidth="1.200" />
      <path d="m10 11 2-7" stroke="#555" />
    </>
  ),
  'Break at Point': (
    <>
      <path d="M1.500 3.500h11v8h-11z" fill="#f6f6f6" stroke="#222" strokeWidth="1.200" />
      <path d="M6 2.500h2v2H6z" fill="#2d77ad" />
    </>
  ),
  Break: (
    <>
      <path d="M4.500 3h-3v9h11V3h-3" stroke="#222" strokeWidth="1.200" {...N} />
      <path d="M3.500 2h2v2h-2zM8.500 2h2v2h-2z" fill="#2d77ad" />
    </>
  ),
  Join: (
    <>
      <path d="M1 7h12" stroke="#222" strokeWidth="1.200" />
      <path d="m7 7-3-3v6zM7 7l3-3v6z" fill="#222" />
    </>
  ),
  Chamfer: (
    <>
      <path d="M2 13V7.500L7.500 2H13" stroke="#3b4c5a" {...N} />
      <path d="M2 7.500 7.500 2" stroke="#2d77ad" strokeWidth="1.500" />
      <path d="M2 7V2h5" stroke="#777" {...N} />
    </>
  ),
  Fillet: (
    <>
      <path d="M2 13V9c0-4 3-7 7-7h4" stroke="#3b4c5a" {...N} />
      <path d="M2 9c0-4 3-7 7-7" stroke="#2d77ad" strokeWidth="1.600" {...N} />
      <path d="M2 6V2h4" stroke="#777" {...N} />
    </>
  ),
  Explode: (
    <>
      <path d="m1 4 5 1 1-3 1 3 3-1-2 3 3 3-4-1-2 4-1-4-3 1 2-3z" fill="#d3432d" />
      <path d="m13 1-5 6" stroke="#e5ae34" strokeWidth="2" />
      <path d="M4 9h4v3H4z" fill="#5c3b2b" />
    </>
  ),
  'Bring to Front': squares('#2f6ba0', '#c9deed'),
  'Send to Back': squares('#c9deed', '#5a8ebb'),
  'Bring Above': (
    <>
      <path d="M5 5h7.500v7.500H5z" fill="#c9deed" stroke={B} />
      <path d="M1.500 1.500h8v8h-8z" fill="#2f6ba0" stroke={B} />
    </>
  ),
  'Send Under': (
    <>
      <path d="M1.500 1.500h9v8h-9z" fill="#5a8ebb" stroke={B} />
      <path d="M5.500 6.500h7v6h-7z" fill="#dfecf5" stroke={B} />
    </>
  )
};

function Icon({ name, size = 14 }) {
  return (
    <svg width={size} height={size} viewBox="0 0 14 14" aria-hidden="true">
      {icons[name]}
    </svg>
  );
}

// '|' in a list of tools stands for a separator
function Tools({ items }) {
  return items.map((name, i) => {
    if (name === '|') return <Sep key={i} />;
    return (
      <ToolButton key={i} $narrow={name === 'more'} aria-label={name} title={name}>
        <Icon name={name} size={name === 'more' ? 9 : 14} />
      </ToolButton>
    );
  });
}

function DockTools({ items }) {
  return (
    <DockPanel>
      <DockGrip />
      {items.map((name, i) =>
        name === '|' ? (
          <DockSep key={i} />
        ) : (
          <ToolButton key={i} aria-label={name} title={name}>
            <Icon name={name} />
          </ToolButton>
        )
      )}
    </DockPanel>
  );
}

function Combo({ label, value, width, lead, cjk, indent }) {
  return (
    <ComboBox $width={width} $indent={indent}>
      {lead && <Lead>{lead}</Lead>}
      <Select aria-label={label} defaultValue={value} $cjk={cjk}>
        <option>{value}</option>
      </Select>
      <ComboArrow>
        <svg width="7" height="5" viewBox="0 0 7 5">
          <path d="M.5 1l3 3 3-3" fill="none" stroke="#aaa" strokeWidth="1.300" />
        </svg>
      </ComboArrow>
    </ComboBox>
  );
}

const Swatch = styled.span`
  width: 8px;
  height: 8px;
  margin: 0 1px 0 2px;
  background: #fff;
  border: 1px solid #333;
`;

const menus = [
  ['文件', 'F'],
  ['编辑', 'E'],
  ['视图', 'V'],
  ['插入', 'I'],
  ['格式', 'O'],
  ['工具', 'T'],
  ['绘图', 'D'],
  ['标注', 'N'],
  ['修改', 'M'],
  ['燕秀工具箱2.81', 'Y'],
  ['窗口', 'W'],
  ['帮助', 'H']
];

const standardTools = [
  'New', 'Open', 'Save', '|',
  'Plot', 'Plot Preview', 'Publish', '3DDWF', '|',
  'Cut', 'Copy', 'Paste', 'Match Properties', 'Block Editor', '|',
  'Undo', 'more', 'Redo', 'more', '|',
  'Pan', 'Zoom Realtime', 'Zoom Window', 'Zoom Previous', '|',
  'Properties', 'DesignCenter', 'Tool Palettes', 'Sheet Set Manager', 'Markup Set Manager', 'QuickCalc', '|',
  'Help'
];

const dimensionTools = [
  'Linear', 'Aligned', 'Arc Length', 'Ordinate', '|',
  'Radius', 'Jogged', 'Diameter', 'Angular', '|',
  'Quick Dimension', 'Baseline', 'Continue', '|',
  'Dimension Space', 'Tolerance', 'Center Mark', '|',
  'Dimension Edit', 'Dimension Text Edit', 'Dimension Update', '|'
];

const modelingTools = [
  'Polysolid', 'Box', 'Wedge', 'Cone', 'Sphere', 'Cylinder', 'Torus', 'Pyramid', 'Helix', 'Planar Surface', '|',
  'Extrude', 'Presspull', 'Sweep', 'Revolve', 'Loft', '|',
  'Union', 'Subtract', 'Intersect', '|',
  '3D Move', '3D Rotate', '3D Align'
];

const drawTools = [
  'Line', 'Construction Line', 'Polyline', 'Polygon', 'Rectangle', 'Arc', 'Circle', 'Revision Cloud', 'Spline',
  'Ellipse', 'Ellipse Arc', 'Insert Block', 'Make Block', 'Point', 'Hatch', 'Gradient', 'Region', 'Table',
  'Multiline Text'
];

const viewTools = [
  'Named Views', '|',
  'Top', 'Bottom', 'Left', 'Right', 'Front', 'Back', '|',
  'SW Isometric', 'SE Isometric', 'NE Isometric', 'NW Isometric', '|',
  'Camera', '|',
  'View Center'
];

const visualTools = ['2D Wireframe', '|', '3D Wireframe', '3D Hidden', 'Realistic', 'Conceptual', '|', 'Visual Styles'];

const modifyTools = [
  'Erase', 'Copy Object', 'Mirror', 'Offset', 'Array', 'Move', 'Rotate', 'Scale', 'Stretch', 'Trim', 'Extend',
  'Break at Point', 'Break', 'Join', 'Chamfer', 'Fillet', 'Explode'
];

const orderTools = ['Bring to Front', 'Send to Back', 'Bring Above', 'Send Under'];

const tabArrows = [
  ['First', 'M4.500 2v6M10 2v6L5.500 5z'],
  ['Previous', 'M9 2v6L5 5z'],
  ['Next', 'M5 2v6l4-3z'],
  ['Last', 'M9.500 2v6M4 2v6l4.500-3z']
];

function ModelSpace() {
  return (
    <Canvas>
      <Drawing>
        <path
          d="M204.500 100v154.500h69V98.500h88v162h62v-154h80v170h94.500V102.500h86.500V273"
          fill="none"
          stroke="#d8d8d8"
        />
        <path d="M275.500 300.500h4v4h-4z" fill="none" stroke="#ddd" />
        <g fill="none" stroke="#bdbdbd">
          <path d="M7.500 350.500h7v7h-7zM11.500 350V319M15 353.500h31" />
          <path d="m11.500 311.500-3 8h6zM54.500 353.500l-8-3v6z" />
        </g>
        <g fill="#bdbdbd" fontSize="12" fontFamily="Liberation Sans, sans-serif">
          <text x="8" y="304">Y</text>
          <text x="61" y="358">X</text>
        </g>
      </Drawing>
      <DynamicPrompt>选择基准标注:</DynamicPrompt>
      <Badge>
        <BadgeEars width="32" height="9" viewBox="0 0 32 9">
          <ellipse cx="7" cy="8" rx="6" ry="8" fill="#b4b4b4" />
          <ellipse cx="23" cy="9" rx="6" ry="8" fill="#b4b4b4" />
        </BadgeEars>
        <svg width="36" height="38" viewBox="0 0 36 38" fill="none" stroke="#c9cdd8" strokeWidth="3" strokeLinecap="round">
          <path d="M2.500 7v20c0 8 6 10 12 7l16-9c4-3 4-9 0-12L16 4C11 1 8 3 8 8v17c0 4 3 5 6 3" />
          <path d="M14 13v10l7-5z" fill="#c9cdd8" stroke="none" />
          <path d="M24 15.500v5" strokeWidth="1.600" />
        </svg>
        <BadgeText>
          <BadgeTitle>溜溜自学</BadgeTitle>
          <BadgeLink href="#">zixue.3D66.COM</BadgeLink>
        </BadgeText>
      </Badge>
    </Canvas>
  );
}

function App() {
  const [tab, setTab] = useState('模型');

  return (
    <Page>
      <GlobalStyle />
      <MenuBar>
        <Icon name="app" size={13} />
        <MenuList>
          {menus.map(([text, key]) => (
            <MenuItem key={text}>
              {text}(<u>{key}</u>)
            </MenuItem>
          ))}
        </MenuList>
        <WindowButton aria-label="Minimize">
          <svg width="8" height="8"><path d="M2 6.500h4" stroke="#55687c" strokeWidth="1.500" /></svg>
        </WindowButton>
        <WindowButton aria-label="Restore">
          <svg width="8" height="8" fill="none" stroke="#55687c"><path d="M2.500 2.500v-1h5v3h-1M.500 3.500h5v3h-5z" /></svg>
        </WindowButton>
        <WindowButton aria-label="Close">
          <svg width="8" height="8"><path d="m1.500 1.500 5 5M6.500 1.500l-5 5" stroke="#55687c" strokeWidth="1.600" /></svg>
        </WindowButton>
      </MenuBar>

      <ToolbarRow>
        <Toolbar>
          <Grip />
          <Tools items={standardTools} />
        </Toolbar>
        <Toolbar>
          <Grip />
          <Tools items={['Text Style']} />
          <Combo label="Text style" value="Standard" width="73px" />
          <Tools items={['|', 'Dimension Style']} />
          <Combo label="Dimension style" value="ISO-25" width="73px" />
          <Tools items={['|', 'Table Style']} />
          <Combo label="Table style" value="Standard" width="73px" />
        </Toolbar>
      </ToolbarRow>

      <ToolbarRow>
        <Toolbar>
          <Grip />
          <Combo label="Workspace" value="AutoCAD 经典" width="128px" indent />
          <Tools items={['Workspace Settings', 'My Workspace']} />
        </Toolbar>
        <Toolbar>
          <Grip />
          <Combo label="Color" value="ByLayer" width="111px" lead={<Swatch />} />
          <Sep />
          <Combo label="Linetype" value="ByLayer" width="117px" lead={<LineSample $width="43px" />} />
          <Sep />
          <Combo label="Lineweight" value="ByLayer" width="92px" lead={<LineSample $width="26px" />} />
          <Sep />
          <Combo label="Plot style" value="随颜色" width="88px" cjk indent />
        </Toolbar>
      </ToolbarRow>

      <ToolbarRow>
        <Toolbar>
          <Grip />
          <Tools items={dimensionTools} />
          <Combo label="Current dimension style" value="ISO-25" width="73px" />
          <Tools items={['Dimension Style']} />
        </Toolbar>
        <Toolbar>
          <Grip />
          <Tools items={['Layers']} />
          <Combo
            label="Layer"
            value="0"
            width="218px"
            lead={
              <>
                <Icon name="bulb" size={12} />
                <Icon name="sun" size={12} />
                <Icon name="freeze" size={12} />
                <Icon name="lock" size={12} />
                <Swatch />
              </>
            }
          />
          <Tools items={['Layer Previous', 'Layer States']} />
        </Toolbar>
      </ToolbarRow>

      <Body>
        <Dock>
          <DockTools items={modelingTools} />
          <DockTools items={drawTools} />
        </Dock>
        <Workspace>
          <ModelSpace />
          <TabBar>
            {tabArrows.map(([name, d]) => (
              <TabNav key={name} aria-label={name}>
                <svg width="13" height="10"><path d={d} fill="#111" stroke="#111" strokeWidth=".8" /></svg>
              </TabNav>
            ))}
            {['模型', '布局1', '布局2'].map(name => (
              <Tab key={name} $active={name === tab} onClick={() => setTab(name)}>
                {name}
              </Tab>
            ))}
          </TabBar>
        </Workspace>
        <Dock $right>
          <DockColumn>
            <DockTools items={viewTools} />
            <DockTools items={visualTools} />
          </DockColumn>
          <DockColumn>
            <DockTools items={modifyTools} />
            <DockTools items={orderTools} />
          </DockColumn>
        </Dock>
      </Body>
      <StatusStrip />
    </Page>
  );
}

export default App;
